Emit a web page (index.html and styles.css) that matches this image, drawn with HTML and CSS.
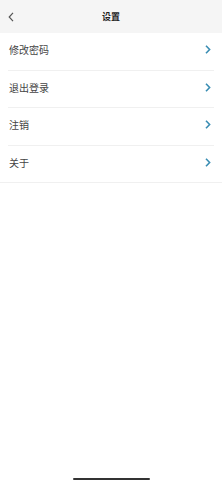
FILE: index.html
```html
<!DOCTYPE html>
<html lang="zh">

<head>
    <meta charset="UTF-8">
    <meta name="viewport" content="width=device-width, initial-scale=1.0">
    <title>设置</title>
    <link rel="stylesheet" href="styles.css">
</head>

<body>
    <div class="page">
        <div class="header">
            <span class="back">
                <svg width="6" height="10" viewBox="0 0 6 10">
                    <path d="M5 0.8 L1.2 5 L5 9.2" fill="none" stroke="#555" stroke-width="1.2" />
                </svg>
            </span>
            <h1>设置</h1>
        </div>

        <ul class="menu">
            <li class="menu-item">
                <span>修改密码</span>
                <svg class="arrow" width="6" height="9" viewBox="0 0 6 9">
                    <path d="M1 0.8 L4.6 4.5 L1 8.2" fill="none" stroke="#3a8db3" stroke-width="1.6" />
                </svg>
            </li>
            <li class="menu-item">
                <span>退出登录</span>
                <svg class="arrow" width="6" height="9" viewBox="0 0 6 9">
                    <path d="M1 0.8 L4.6 4.5 L1 8.2" fill="none" stroke="#3a8db3" stroke-width="1.6" />
                </svg>
            </li>
            <li class="menu-item">
                <span>注销</span>
                <svg class="arrow" width="6" height="9" viewBox="0 0 6 9">
                    <path d="M1 0.8 L4.6 4.5 L1 8.2" fill="none" stroke="#3a8db3" stroke-width="1.6" />
                </svg>
            </li>
            <li class="menu-item last">
                <span>关于</span>
                <svg class="arrow" width="6" height="9" viewBox="0 0 6 9">
                    <path d="M1 0.8 L4.6 4.5 L1 8.2" fill="none" stroke="#3a8db3" stroke-width="1.6" />
                </svg>
            </li>
        </ul>

        <div class="home-bar"></div>
    </div>
</body>

</html>
```

FILE: styles.css
```css
body {
    margin: 0;
    font-family: 'Noto Sans CJK SC', 'Noto Sans', sans-serif;
    background-color: #fff;
    color: #444;
}

.page {
    height: 480px;
    display: flex;
    flex-direction: column;
}

.header {
    height: 33px;
    background-color: #f5f5f5;
    display: flex;
    align-items: center;
    justify-content: center;
    position: relative;
}

.back {
    position: absolute;
    left: 8px;
    top: 12px;
    display: flex;
}

h1 {
    margin: 0;
    font-size: 9px;
    font-weight: bold;
    color: #222;
}

.menu {
    list-style: none;
    margin: 0;
    padding: 0;
}

.menu-item {
    height: 37px;
    margin: 0 8px;
    padding: 0 3px 0 1px;
    display: flex;
    align-items: center;
    justify-content: space-between;
    border-bottom: 1px solid #f0f0f0;
    font-size: 10px;
    padding-bottom: 3px;
    box-sizing: border-box;
    height: 37.5px;
}

.menu-item.last {
    margin: 0;
    padding-left: 9px;
    padding-right: 11px;
}

.home-bar {
    margin-top: auto;
    align-self: center;
    width: 77px;
    height: 2px;
    background-color: #333;
    border-radius: 1px;
    margin-bottom: 0;
}
```
